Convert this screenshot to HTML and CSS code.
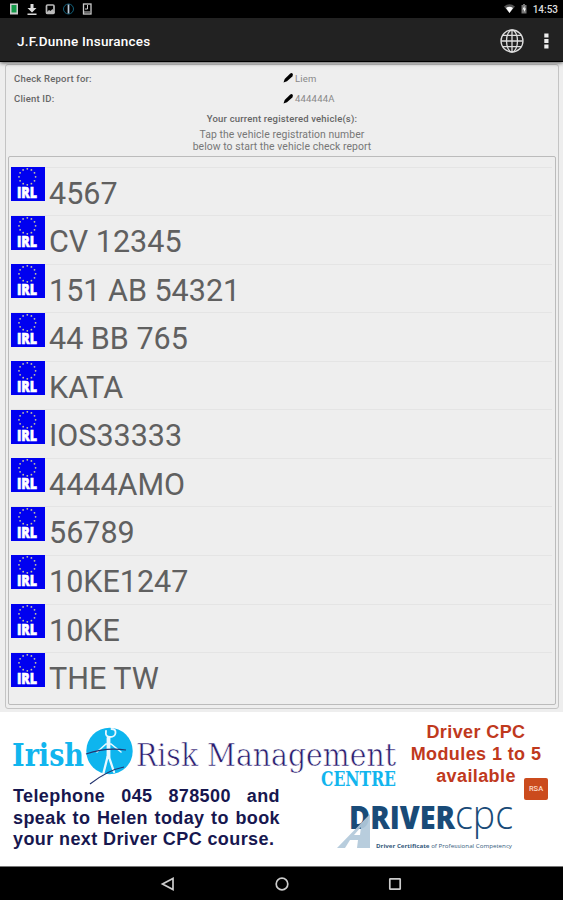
FILE: index.html
```html
<!DOCTYPE html>
<html lang="en">
<head>
    <meta charset="UTF-8">
    <meta name="viewport" content="width=device-width, initial-scale=1.0">
    <title>J.F.Dunne Insurances</title>
    <link rel="stylesheet" href="styles.css">
</head>

<body>
    <div class="status-bar">
        <svg class="status-icons" width="84" height="14" viewBox="0 0 84 14">
            <rect x="1" y="1.5" width="8" height="11" fill="#ccc"/>
            <rect x="2.5" y="3" width="5" height="7.5" fill="#139a49"/>
            <path d="M21.500 2h3v4h3l-4.500 4.500-4.500-4.500h3zM18.500 11.500h9v1.500h-9z" fill="#ddd"/>
            <rect x="37.500" y="3" width="7.500" height="8.500" rx="1" fill="none" stroke="#bbb" stroke-width="1.700"/>
            <path d="M38 10l2-2 1.500 1 2-2 2 3v1h-7.500z" fill="#bbb"/>
            <circle cx="59.500" cy="7" r="5" fill="none" stroke="#12617c" stroke-width="1"/>
            <path d="M59.500 2.500v9" stroke="#bcd" stroke-width="1.700"/>
            <rect x="74.500" y="2" width="7.500" height="10" fill="none" stroke="#ccc" stroke-width="1.300"/>
            <path d="M78.500 3v4h-2.500M75 10h6" fill="none" stroke="#ccc"/>
        </svg>
        <div class="status-right">
            <svg width="26" height="12" viewBox="0 0 26 12">
                <path d="M0 3.500Q5.500-1 11 3.500L5.500 10z" fill="#555"/>
                <path d="M2 5Q5.500 2.500 9 5L5.500 10z" fill="#fff"/>
                <path d="M17.500 2h1.500V1h2v1h1.500v8.500h-5z" fill="#777"/>
                <path d="M20.500 3l-2 3.500h1.500v2.500l2-3.500h-1.500z" fill="#fff"/>
            </svg>
            <span class="clock">14:53</span>
        </div>
    </div>

    <header class="app-bar">
        <h1>J.F.Dunne Insurances</h1>
        <svg class="globe" width="24" height="24" viewBox="0 0 24 24">
            <circle cx="12" cy="12" r="11"/>
            <ellipse cx="12" cy="12" rx="5.500" ry="11"/>
            <path d="M12 1v22M1 12h22M3 6.300h18M3 17.700h18"/>
        </svg>
        <svg class="menu" width="5" height="16" viewBox="0 0 5 16">
            <path d="M.300.500h4.200v4H.300zM.300 6h4.200v4H.300zM.300 11.500h4.200v4H.300z" fill="#eee"/>
        </svg>
    </header>

    <main>
        <section class="panel">
            <div class="field">
                <span class="field-label">Check Report for:</span>
                <span class="field-value"><svg width="11" height="10" viewBox="0 0 11 10"><path d="M.500 9.500l1.200-3.500L7 .800q1.500-1.200 2.500-.300T9.300 3.500L4 8.300z"/></svg>Liem</span>
            </div>
            <div class="field">
                <span class="field-label">Client ID:</span>
                <span class="field-value id"><svg width="11" height="10" viewBox="0 0 11 10"><path d="M.500 9.500l1.200-3.500L7 .800q1.500-1.200 2.500-.300T9.300 3.500L4 8.300z"/></svg>444444A</span>
            </div>
            <h2>Your current registered vehicle(s):</h2>
            <p class="hint">Tap the vehicle registration number<br>below to start the vehicle check report</p>

            <ul class="vehicles" id="vehicles"></ul>
        </section>
    </main>

    <footer class="banner">
        <div class="banner-row top">
            <svg class="irm-logo" width="400" height="72" viewBox="0 0 400 72">
                <text class="slab-bold" x="12" y="47" font-size="31" textLength="72" lengthAdjust="spacingAndGlyphs">Irish</text>
                <circle cx="109.500" cy="32" r="23.200" fill="#0eb5ee"/>
                <g fill="none" stroke="#e9f8ff" stroke-linecap="round">
                    <path d="M106 12q-1 6 4 6t5.500-4-4-4" stroke-width="1.800"/>
                    <path d="M97 33l9-8h5l10 8" stroke-width="1.600"/>
                    <path d="M108.500 19v19" stroke-width="3.800"/>
                    <path d="M107.500 38l-5 20M109 38l5 15" stroke-width="2.300"/>
                </g>
                <path d="M86 35q20-7 40-4M90 65q18-14 34-17" fill="none" stroke="#24346f" stroke-width="1.200"/>
                <text class="slab-light" x="136" y="47" font-size="31" textLength="260" lengthAdjust="spacingAndGlyphs">Risk Management</text>
                <text class="slab-bold" x="321" y="67" font-size="20" textLength="75" lengthAdjust="spacingAndGlyphs">CENTRE</text>
            </svg>
            <p class="modules">Driver CPC<br>Modules 1 to 5<br>available</p>
        </div>
        <div class="banner-row bottom">
            <div class="phone">
                <p>Telephone 045 878500 and</p>
                <p>speak to Helen today to book</p>
                <p class="last">your next Driver CPC course.</p>
            </div>
            <svg class="cpc-logo" width="180" height="50" viewBox="0 0 180 50">
                <text class="cpc-bold" x="12" y="28" font-size="32" textLength="106" lengthAdjust="spacingAndGlyphs">DRIVER</text>
                <path d="M0 47L33 13v34H20l1-8h-8l-5 8zM17 34h6l1-8z" fill="#b3c9da" fill-rule="evenodd" opacity=".93"/>
                <text class="cpc-light" x="118" y="28" font-size="41" textLength="58" lengthAdjust="spacingAndGlyphs">cpc</text>
                <text class="cpc-small" x="39" y="47" font-size="6" textLength="136" lengthAdjust="spacingAndGlyphs"><tspan font-weight="bold">Driver Certificate</tspan> of Professional Competency</text>
            </svg>
        </div>
        <div class="rsa">RSA</div>
    </footer>

    <nav class="nav-bar">
        <svg width="14" height="14" viewBox="0 0 14 14"><path d="M12 1.500v11L1.500 7z"/></svg>
        <svg width="14" height="14" viewBox="0 0 14 14"><circle cx="7" cy="7" r="5.800"/></svg>
        <svg width="14" height="14" viewBox="0 0 14 14"><rect x="1.800" y="1.800" width="10.400" height="10.400" rx=".500"/></svg>
    </nav>

    <script src="vehicles.js"></script>
</body>
</html>
```
FILE: vehicles.js
```js
var vehicles = ['4567', 'CV 12345', '151 AB 54321', '44 BB 765', 'KATA', 'IOS33333',
    '4444AMO', '56789', '10KE1247', '10KE', 'THE TW'];

// ring of twelve stars for the plate badge
var stars = '';
for (var i = 0; i < 12; i++) {
    var a = i * Math.PI / 6;
    stars += '<circle cx="' + (16.3 + 8.3 * Math.sin(a)).toFixed(1) + '" cy="' + (9.8 - 8 * Math.cos(a)).toFixed(1) + '" r="0.9"/>';
}

var list = document.getElementById('vehicles');
vehicles.forEach(function(reg) {
    var li = document.createElement('li');
    li.innerHTML = '<svg class="plate" width="34" height="34" viewBox="0 0 34 34">' +
        '<rect width="34" height="34" fill="#0000f0"/>' +
        '<g fill="#c9c7a0">' + stars + '</g>' +
        '<text x="6" y="30.5" textLength="20" lengthAdjust="spacingAndGlyphs">IRL</text></svg>' +
        '<span>' + reg + '</span>';
    list.appendChild(li);
});
```
FILE: styles.css
```css
* {
    box-sizing: border-box;
}

body {
    margin: 0;
    width: 563px;
    height: 900px;
    overflow: hidden;
    display: flex;
    flex-direction: column;
    font-family: Roboto, sans-serif;
    background: #fff;
}

h1, h2, p, ul {
    margin: 0;
    padding: 0;
}

svg {
    display: block;
    flex: none;
    overflow: visible;
}

.status-bar {
    height: 18px;
    flex: none;
    background: #000;
    display: flex;
    justify-content: space-between;
    align-items: center;
    padding: 0 5px 0 9px;
}

.status-right {
    display: flex;
    align-items: center;
    gap: 3px;
}

.clock {
    color: #ddd;
    font-size: 10px;
    font-weight: 500;
    line-height: 18px;
    padding-top: 1px;
}

.app-bar {
    height: 44px;
    flex: none;
    background: #222;
    border-bottom: 1px solid #000;
    box-shadow: 0 1px 4px rgba(0, 0, 0, 0.65);
    display: flex;
    align-items: center;
    padding: 3px 14px 0 17px;
    position: relative;
    z-index: 1;
}

.app-bar h1 {
    flex: 1;
    color: #fff;
    font-size: 13.5px;
    font-weight: 500;
    letter-spacing: 0.22px;
}

.globe {
    margin-right: 20px;
    fill: none;
    stroke: #ddd;
    stroke-width: 1.3;
}

main {
    height: 650px;
    flex: none;
    background: #eee;
    padding: 2px 4px 3px 5px;
}

.panel {
    height: 645px;
    border: 1px solid #c4c4c4;
    border-radius: 3px;
    padding: 3px 2px;
    color: #777;
}

.field {
    display: flex;
    height: 20.5px;
    align-items: center;
    font-size: 9.5px;
    letter-spacing: 0.2px;
    padding-left: 6px;
}

.field-label {
    width: 269px;
    color: #666;
    font-weight: 500;
}

.field-value {
    display: flex;
    align-items: center;
    gap: 1px;
    color: #888;
}

.panel h2 {
    font-size: 9.5px;
    font-weight: 500;
    line-height: 20px;
    letter-spacing: 0.18px;
    text-align: center;
    color: #666;
}

.hint {
    font-size: 10.4px;
    line-height: 12.3px;
    letter-spacing: 0.07px;
    text-align: center;
}

.vehicles {
    list-style: none;
    margin-top: 2px;
    height: 549px;
    border: 1px solid #bbb;
    border-radius: 2px;
    padding: 10px 3px 0 2px;
}

.vehicles li {
    height: 48.55px;
    border-top: 1px solid #e4e4e4;
    display: flex;
    align-items: flex-start;
    gap: 4px;
}

.vehicles span {
    font-size: 30.5px;
    line-height: 36px;
    padding-top: 8px;
    color: #606060;
}

.plate {
    margin-top: -0.5px;
}

.plate text {
    font-family: "Open Sans", sans-serif;
    font-weight: 800;
    font-size: 15.5px;
    fill: #fff;
    stroke: #fff;
    stroke-width: 0.6px;
}

.banner {
    height: 154px;
    flex: none;
    position: relative;
    background: #fff;
    padding-top: 7px;
}

.banner-row {
    display: flex;
}

.banner-row.top {
    height: 67px;
}

.slab-bold {
    font-family: "DejaVu Serif", serif;
    font-weight: bold;
    fill: #12b5ee;
}

.slab-light {
    font-family: "DejaVu Serif", serif;
    fill: #2b1d70;
    stroke: #fff;
    stroke-width: 0.6px;
}

.modules {
    width: 152px;
    padding-top: 2px;
    text-align: center;
    font-family: "Liberation Sans", sans-serif;
    font-weight: bold;
    font-size: 18px;
    line-height: 22px;
    letter-spacing: 0.4px;
    color: #c0391d;
}

.phone {
    width: 267px;
    margin: 0 57px 0 13px;
    font-family: "Liberation Sans", sans-serif;
    font-weight: bold;
    font-size: 18px;
    line-height: 21.7px;
    letter-spacing: 0.4px;
    color: #17174f;
}

.phone p {
    white-space: nowrap;
    text-align-last: justify;
}

.phone .last {
    text-align-last: left;
}

.cpc-logo {
    margin-top: 15px;
}

.cpc-bold {
    font-family: "Open Sans", sans-serif;
    font-weight: 800;
    fill: #194b78;
}

.cpc-light {
    font-family: "Open Sans", sans-serif;
    font-weight: 300;
    fill: #194b78;
}

.cpc-small {
    font-family: "Open Sans", sans-serif;
    fill: #345a7c;
}

.rsa {
    position: absolute;
    left: 524px;
    top: 66px;
    width: 24px;
    height: 22px;
    border-radius: 2px;
    background: #cb4b1d;
    color: #fbd9c8;
    font-size: 7.5px;
    font-weight: 500;
    line-height: 22px;
    text-align: center;
}

.nav-bar {
    height: 34px;
    flex: none;
    background: #000;
    border-top: 1px solid #777;
    display: flex;
    justify-content: center;
    align-items: center;
    gap: 99.5px;
}

.nav-bar svg {
    fill: none;
    stroke: #ccc;
    stroke-width: 1.7;
}
```
